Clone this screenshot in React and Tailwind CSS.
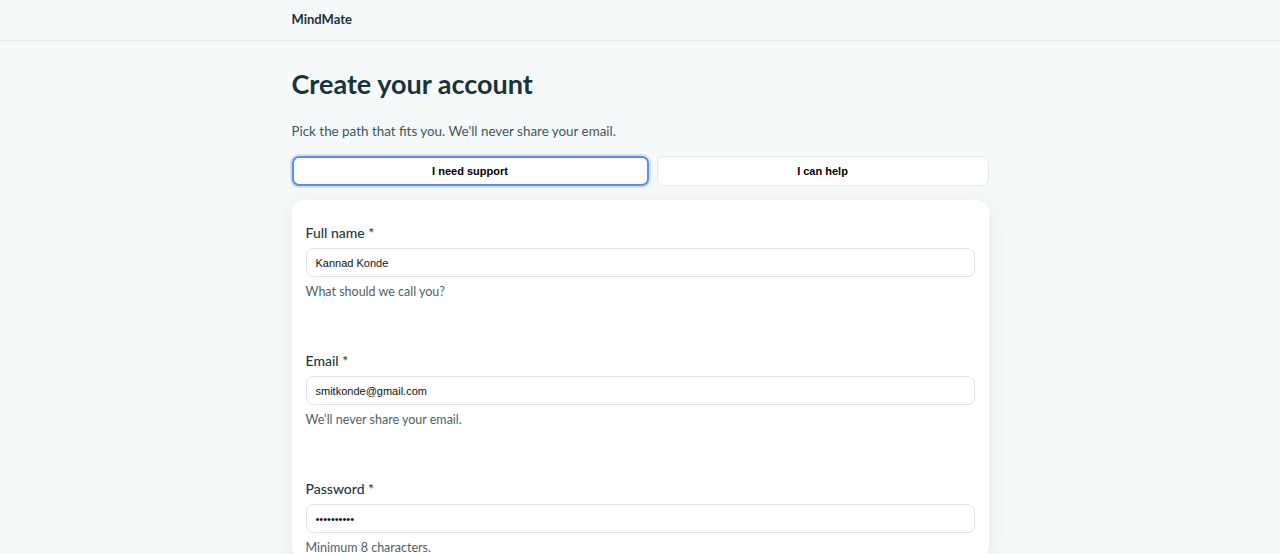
import React from 'react';

const sans = { fontFamily: 'Lato, "Noto Sans", sans-serif' };

function Field({ label, value, type = 'text', hint }) {
  return (
    <div className="mb-[49px]">
      <label className="block text-[14px] leading-5 font-medium text-[#1f3a40] mb-[5px]">{label}</label>
      <input
        type={type}
        defaultValue={value}
        className="w-full h-[29px] rounded-[7px] border border-[#dde5e5] bg-white px-[9px] text-[11px] text-[#111] outline-none"
        style={{ fontFamily: '"Liberation Sans", Arial, sans-serif' }}
      />
      <p className="mt-[5px] text-[12.5px] leading-5 text-[#4d6469]">{hint}</p>
    </div>
  );
}

export default function App() {
  return (
    <div className="min-h-[554px] bg-[#f6f9f9]" style={sans}>
      <header className="h-[41px] border-b border-[#e3eaea]">
        <div className="mx-auto w-[697px] h-full flex items-center">
          <span className="text-[13px] font-bold text-[#1b333a]">MindMate</span>
        </div>
      </header>

      <main className="mx-auto w-[697px] pt-[25px]">
        <h1 className="text-[27px] leading-9 font-bold text-[#17343d]">Create your account</h1>
        <p className="mt-[19px] text-[13.4px] leading-5 text-[#3f575d]">
          Pick the path that fits you. We'll never share your email.
        </p>

        <div className="mt-[15px] flex gap-2" style={{ fontFamily: '"Liberation Sans", Arial, sans-serif' }}>
          <button
            type="button"
            className="flex-1 h-[30px] rounded-[7px] bg-white border-2 border-[#5b8def] ring-2 ring-[#cfe0fb] text-[11px] font-bold text-black"
          >
            I need support
          </button>
          <button
            type="button"
            className="w-[332px] h-[30px] rounded-[7px] bg-white border border-[#e3eaea] text-[11px] font-bold text-black"
          >
            I can help
          </button>
        </div>

        <div className="mt-[14px] rounded-[12px] bg-white shadow-[0_4px_20px_rgba(30,60,70,0.08)] px-[14px] pt-[23px]">
          <Field label="Full name *" value="Kannad Konde" hint="What should we call you?" />
          <Field label="Email *" value="smitkonde@gmail.com" hint="We'll never share your email." />
          <Field label="Password *" value="pass123456" type="password" hint="Minimum 8 characters." />
        </div>
      </main>
    </div>
  );
}
